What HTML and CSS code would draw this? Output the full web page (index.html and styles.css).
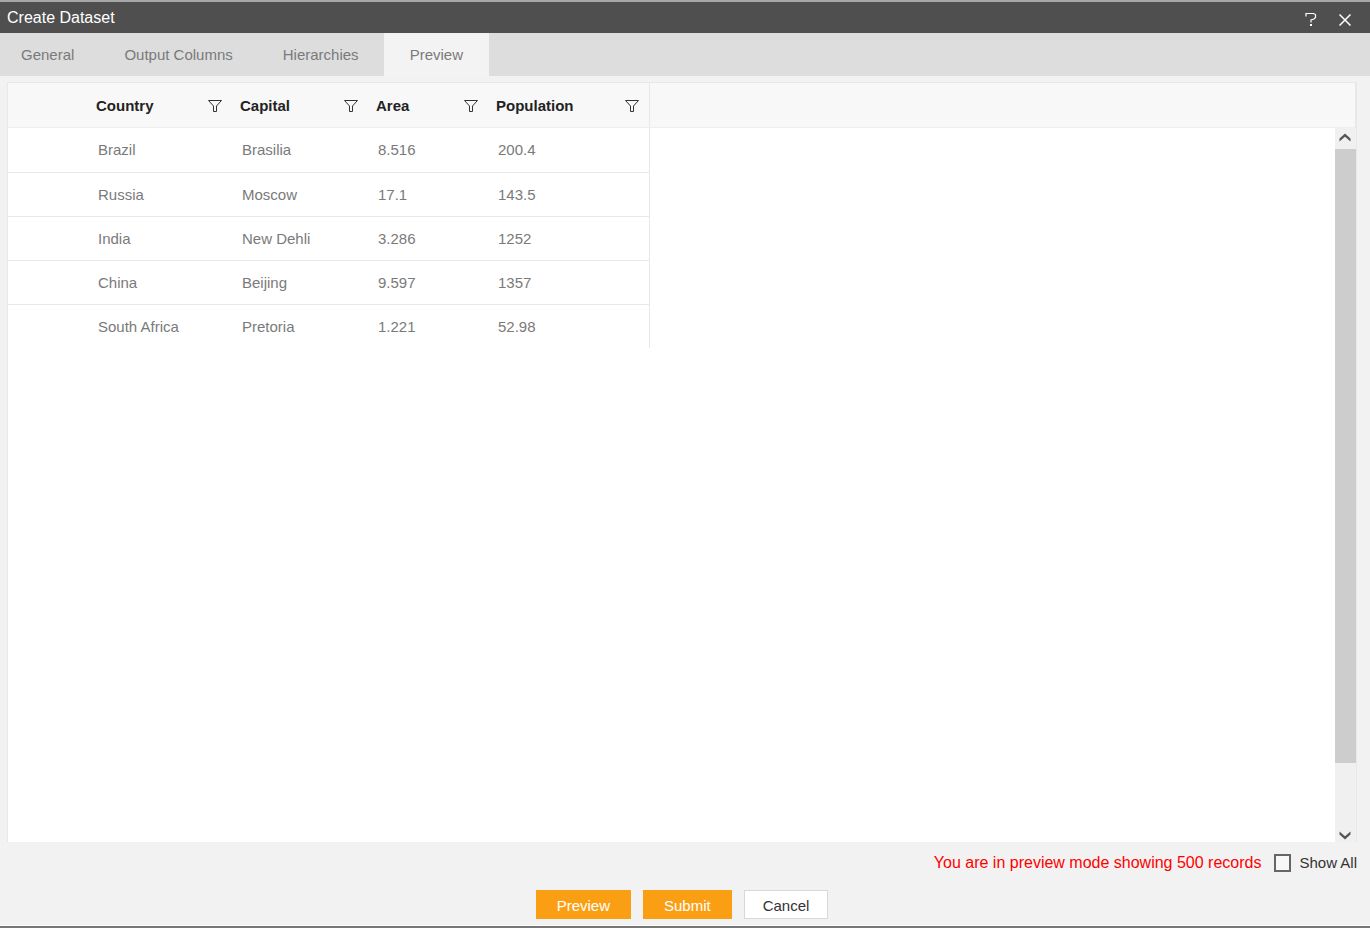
FILE: index.html
```html
<!DOCTYPE html>
<html lang="en">
<head>
<meta charset="utf-8">
<title>Create Dataset</title>
<link rel="stylesheet" href="styles.css">
</head>
<body>
<svg class="sprite" aria-hidden="true">
  <symbol id="funnel" viewBox="0 0 14 12">
    <path d="M0.5 0.5H13.5L8.5 6V11.5H5.5V6Z" fill="none" stroke="currentColor" stroke-width="1"/>
  </symbol>
</svg>
<main class="dialog">
  <header class="titlebar">
    <h1 class="title">Create Dataset</h1>
    <button class="icon-button" type="button" aria-label="Help">
      <svg width="12" height="15" viewBox="0 0 12 15"><path d="M1 4.500V1.500H8.500L10.500 2.500V5.500L9 7L6 8V10.500" fill="none" stroke="currentColor" stroke-width="1.200"/><path d="M5 12H7V14H5Z" fill="currentColor"/></svg>
    </button>
    <button class="icon-button" type="button" aria-label="Close">
      <svg width="12" height="12" viewBox="0 0 12 12"><path d="M0.500 0.500L11.500 11.500M11.500 0.500L0.500 11.500" fill="none" stroke="currentColor" stroke-width="1.500"/></svg>
    </button>
  </header>
  <nav class="tabs" role="tablist">
    <button class="tab tab-first" type="button" role="tab">General</button>
    <button class="tab" type="button" role="tab">Output Columns</button>
    <button class="tab" type="button" role="tab">Hierarchies</button>
    <button class="tab tab-active" type="button" role="tab" aria-selected="true">Preview</button>
  </nav>
  <section class="grid">
    <div class="grid-head">
      <table class="data">
        <colgroup><col class="c-select"><col class="c-country"><col class="c-capital"><col class="c-area"><col class="c-population"></colgroup>
        <thead>
          <tr>
            <td></td>
            <th scope="col"><div class="head-cell">Country<button class="filter" type="button" aria-label="Filter Country"><svg width="14" height="12"><use href="#funnel"/></svg></button></div></th>
            <th scope="col"><div class="head-cell">Capital<button class="filter" type="button" aria-label="Filter Capital"><svg width="14" height="12"><use href="#funnel"/></svg></button></div></th>
            <th scope="col"><div class="head-cell">Area<button class="filter" type="button" aria-label="Filter Area"><svg width="14" height="12"><use href="#funnel"/></svg></button></div></th>
            <th scope="col"><div class="head-cell">Population<button class="filter" type="button" aria-label="Filter Population"><svg width="14" height="12"><use href="#funnel"/></svg></button></div></th>
          </tr>
        </thead>
      </table>
    </div>
    <div class="grid-body">
      <div class="grid-content">
        <table class="data">
          <colgroup><col class="c-select"><col class="c-country"><col class="c-capital"><col class="c-area"><col class="c-population"></colgroup>
          <tbody>
            <tr><td></td><td>Brazil</td><td>Brasilia</td><td>8.516</td><td>200.4</td></tr>
            <tr><td></td><td>Russia</td><td>Moscow</td><td>17.1</td><td>143.5</td></tr>
            <tr><td></td><td>India</td><td>New Dehli</td><td>3.286</td><td>1252</td></tr>
            <tr><td></td><td>China</td><td>Beijing</td><td>9.597</td><td>1357</td></tr>
            <tr><td></td><td>South Africa</td><td>Pretoria</td><td>1.221</td><td>52.98</td></tr>
          </tbody>
        </table>
      </div>
      <div class="scrollbar">
        <button class="scroll-arrow" type="button" aria-label="Scroll up"><svg width="12" height="9" viewBox="0 0 12 9"><path d="M0.500 5.500L6 0.500L11.500 5.500V8.500L6 3.700L0.500 8.500Z" fill="currentColor"/></svg></button>
        <div class="scroll-track"><div class="scroll-thumb"></div></div>
        <button class="scroll-arrow scroll-down" type="button" aria-label="Scroll down"><svg width="12" height="9" viewBox="0 0 12 9"><path d="M0.500 3.500L6 8.500L11.500 3.500V0.500L6 5.300L0.500 0.500Z" fill="currentColor"/></svg></button>
      </div>
    </div>
  </section>
  <div class="status">
    <span class="notice">You are in preview mode showing 500 records</span>
    <input class="check" type="checkbox" id="show-all">
    <label class="check-label" for="show-all">Show All</label>
  </div>
  <footer class="actions">
    <button class="button button-primary" type="button">Preview</button>
    <button class="button button-primary" type="button">Submit</button>
    <button class="button button-plain" type="button">Cancel</button>
  </footer>
</main>
</body>
</html>
```
FILE: styles.css
```css
* { box-sizing: border-box; }

body {
  margin: 0;
  background: #f2f2f2;
  color: #7a7a7a;
  font: 15px/20px "Liberation Sans", Arial, sans-serif;
}

button {
  margin: 0;
  padding: 0;
  border: 0;
  background: none;
  color: inherit;
  font: inherit;
}

svg { display: block; }
.sprite { display: none; }

.dialog {
  display: flex;
  flex-direction: column;
  min-height: 100vh;
  border-top: 2px solid #a6a6a6;
  border-bottom: 2px solid #777;
}

.titlebar {
  display: flex;
  align-items: center;
  gap: 22px;
  height: 31px;
  padding: 0 19px 0 7px;
  background: #4f4f4f;
  color: #fff;
}
.title {
  flex: 1;
  margin: 0;
  font-size: 16px;
  font-weight: 400;
}
.icon-button { padding-top: 4px; }

.tabs {
  display: flex;
  height: 43px;
  background: #ddd;
}
.tab { padding: 0 25px; }
.tab-first { padding-left: 21px; }
.tab-active { padding: 0 26px; background: #f3f3f3; }

.grid {
  flex: 1;
  display: flex;
  flex-direction: column;
  margin: 6px 13px 0 7px;
  border: 1px solid #e8e8e8;
  border-bottom: 0;
  background: #fff;
}
.grid-head {
  border-right: 1px solid #e8e8e8;
  border-bottom: 1px solid #efefef;
  background: #f8f8f8;
}
.grid-body {
  flex: 1;
  display: flex;
}
.grid-content { flex: 1; }

.data {
  width: 642px;
  table-layout: fixed;
  border-collapse: separate;
  border-spacing: 0;
  border-right: 1px solid #e8e8e8;
}
.c-select { width: 80px; }
.c-country { width: 144px; }
.c-capital { width: 136px; }
.c-area { width: 120px; }

.data th, .data td {
  height: 44px;
  padding: 0 10px;
  text-align: left;
}
.data th { padding: 2px 10px 0 8px; color: #222; }
.data tr + tr td { border-top: 1px solid #e8e8e8; }

.head-cell {
  display: flex;
  align-items: center;
  justify-content: space-between;
}
.filter { color: #333; }

.scrollbar {
  display: flex;
  flex-direction: column;
  width: 21px;
  background: #f0f0f0;
}
.scroll-arrow {
  display: flex;
  align-items: center;
  justify-content: center;
  height: 21px;
  padding: 0 1px 2px 0;
  color: #555;
}
.scroll-down { height: 11px; }
.scroll-track { flex: 1; }
.scroll-thumb {
  height: 90%;
  background: #cdcdcd;
}

.status {
  display: flex;
  align-items: center;
  justify-content: flex-end;
  height: 42px;
  padding-right: 13px;
}
.notice { color: #f00; font-size: 16px; }
.check {
  appearance: none;
  width: 17px;
  height: 18px;
  margin: 0 8px 0 13px;
  border: 2px solid #666;
  background: #f8f8f8;
}
.check-label { color: #333; }

.actions {
  display: flex;
  justify-content: center;
  gap: 12px;
  padding: 6px 6px 6px 0;
  border-bottom: 1px solid #fff;
}
.button {
  height: 29px;
  padding: 2px 20px 0;
  border: 1px solid #fa9f14;
}
.button-primary { background: #fa9f14; color: #fff; }
.button-plain {
  padding: 2px 18px 0;
  border-color: #d8d8d8;
  background: #fff;
  color: #333;
}
```
